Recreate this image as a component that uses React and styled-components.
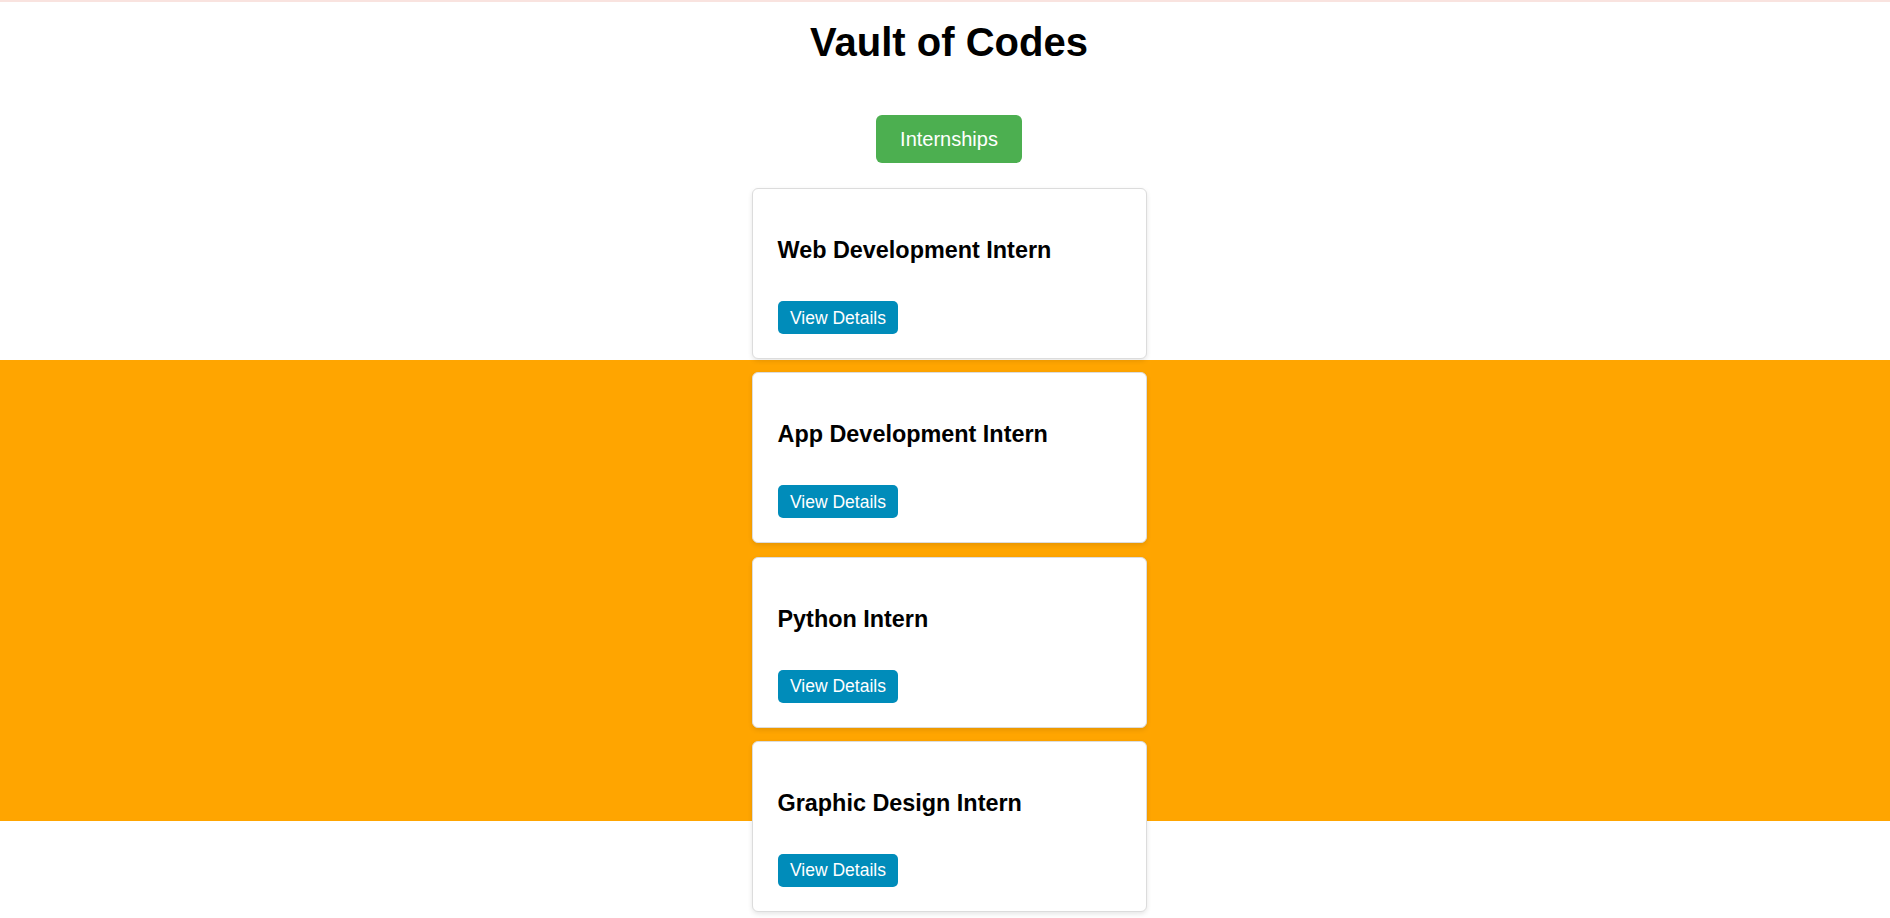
import React from "react";
import styled, { createGlobalStyle } from "styled-components";

const GlobalStyle = createGlobalStyle`
  html, body {
    margin: 0;
    padding: 0;
    background: #ffffff;
    font-family: "Liberation Sans", Arial, sans-serif;
  }
`;

const Page = styled.div`
  min-height: 918px;
  box-sizing: border-box;
  border-top: 2px solid #f9e3df;
  padding-left: 8px;
  background: linear-gradient(
    to bottom,
    #ffffff 0,
    #ffffff 358px,
    #ffa500 358px,
    #ffa500 819px,
    #ffffff 819px
  );
  display: flex;
  flex-direction: column;
  align-items: center;
`;

const Title = styled.h1`
  margin: 17px 0 0;
  font-size: 40px;
  line-height: 46px;
  font-weight: 700;
  color: #000;
`;

const NavButton = styled.button`
  margin-top: 50px;
  background: #4caf50;
  color: #fff;
  border: none;
  border-radius: 6px;
  font-family: inherit;
  font-size: 20px;
  line-height: 23px;
  padding: 12.5px 24.5px;
  cursor: pointer;
`;

const CardList = styled.div`
  margin-top: 25px;
  display: flex;
  flex-direction: column;
  gap: 13.3px;
`;

const Card = styled.div`
  box-sizing: border-box;
  width: 395px;
  background: #fff;
  border: 1px solid #dcdcdc;
  border-radius: 6px;
  box-shadow: 0 2px 5px rgba(0, 0, 0, 0.1);
  padding: 48px 25px 24px;
  display: flex;
  flex-direction: column;
  align-items: flex-start;
`;

const CardTitle = styled.h3`
  margin: 0;
  font-size: 23.4px;
  line-height: 27px;
  font-weight: 700;
  color: #000;
`;

const DetailsButton = styled.button`
  margin-top: 37px;
  background: #008cba;
  color: #fff;
  border: none;
  border-radius: 5px;
  font-family: inherit;
  font-size: 17.5px;
  line-height: 20px;
  padding: 6.5px 12.5px;
  cursor: pointer;
`;

const internships = [
  "Web Development Intern",
  "App Development Intern",
  "Python Intern",
  "Graphic Design Intern",
];

export default function App() {
  return (
    <>
      <GlobalStyle />
      <Page>
        <Title>Vault of Codes</Title>
        <NavButton>Internships</NavButton>
        <CardList>
          {internships.map((name) => (
            <Card key={name}>
              <CardTitle>{name}</CardTitle>
              <DetailsButton>View Details</DetailsButton>
            </Card>
          ))}
        </CardList>
      </Page>
    </>
  );
}
